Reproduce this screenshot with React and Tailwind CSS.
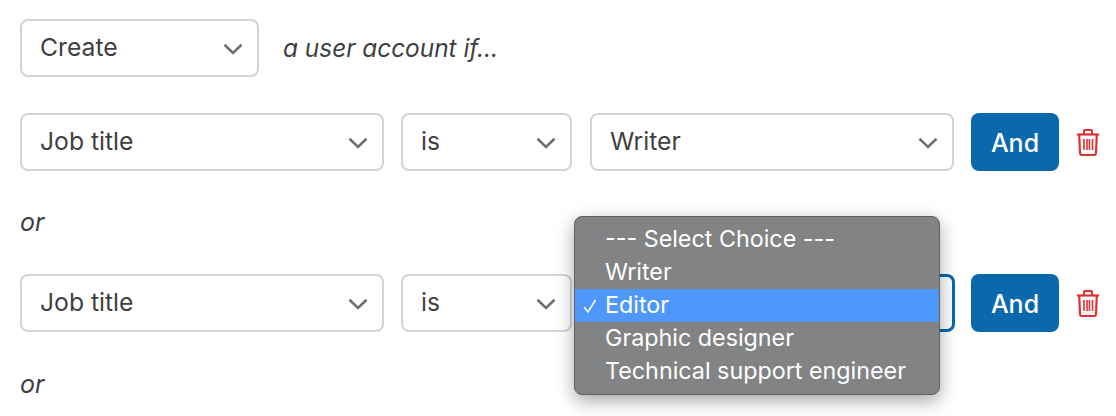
import React from "react";

function Chevron() {
  return (
    <svg width="20" height="12" viewBox="0 0 20 12" fill="none" className="shrink-0 mt-[2px]">
      <path d="M1.5 1.8 L10 10 L18.5 1.8" stroke="#707070" strokeWidth="2.6" />
    </svg>
  );
}

function Select({ label, className = "", focused = false }) {
  return (
    <div
      className={`h-[58px] flex items-center justify-between pl-[18px] pr-[14px] rounded-[8px] bg-white text-[24.7px] text-[#3f3f42] ${
        focused ? "border-[3px] border-[#0a68ad]" : "border-2 border-[#d4d4d4]"
      } ${className}`}
    >
      <span>{label}</span>
      <Chevron />
    </div>
  );
}

function Trash() {
  return (
    <svg width="24" height="27" viewBox="0 0 24 27" fill="none" stroke="#dc3232" strokeWidth="2.2" className="shrink-0">
      <path d="M1 5.5 H23" />
      <path d="M8 5 V2.5 Q8 1 9.5 1 H14.5 Q16 1 16 2.5 V5" />
      <path d="M3.2 5.5 L4 24 Q4.1 26 6 26 H18 Q19.9 26 20 24 L20.8 5.5" />
      <path d="M8 10 V21 M11 10 V21 M13.5 10 V21 M16.5 10 V21" strokeWidth="1.6" />
    </svg>
  );
}

function AndButton() {
  return (
    <div className="w-[88px] h-[58px] pt-[3px] flex items-center justify-center rounded-[8px] bg-[#0a68ad] text-white text-[25px] font-medium">
      And
    </div>
  );
}

function Row({ third, focused }) {
  return (
    <div className="flex items-center">
      <Select label="Job title" className="w-[364px]" />
      <Select label="is" className="w-[171px] ml-[17px]" />
      <div className="relative ml-[18px] w-[365px] h-[58px]">
        {focused ? (
          <Select label="" className="w-full" focused />
        ) : (
          <Select label={third} className="w-[364px]" />
        )}
        {focused && <Dropdown />}
      </div>
      <div className="ml-[16px]">
        <AndButton />
      </div>
      <div className="ml-[17px]">
        <Trash />
      </div>
    </div>
  );
}

const CHOICES = ["--- Select Choice ---", "Writer", "Editor", "Graphic designer", "Technical support engineer"];

function Dropdown() {
  return (
    <div className="absolute left-[-16px] top-[-58px] w-[366px] h-[179px] z-10 py-[6px] rounded-[8px] bg-[#828384] border border-[#5e5f60] shadow-[0_6px_18px_rgba(0,0,0,0.35)] text-white text-[23.3px] leading-[31px]">
      {CHOICES.map((c) => (
        <div key={c} className={`relative h-[33px] pl-[30px] whitespace-nowrap ${c === "Editor" ? "bg-[#4f97fb]" : ""}`}>
          {c === "Editor" && (
            <svg width="14" height="14" viewBox="0 0 14 14" fill="none" stroke="white" strokeWidth="1.5" className="absolute left-[8px] top-[10px]">
              <path d="M1 8 L5 13 L12.5 1" />
            </svg>
          )}
          {c}
        </div>
      ))}
    </div>
  );
}

export default function App() {
  return (
    <div className="w-[1116px] h-[416px] overflow-hidden bg-white pl-[20px] pt-[19px] font-['Inter',sans-serif]">
      <div className="flex items-center">
        <Select label="Create" className="w-[239px]" />
        <span className="ml-[24px] text-[24.4px] italic text-[#3f3f42]">a user account if...</span>
      </div>
      <div className="mt-[36px]">
        <Row third="Writer" />
      </div>
      <div className="mt-[35px] text-[25px] leading-[32px] italic text-[#3f3f42]">or</div>
      <div className="mt-[36px]">
        <Row third="Editor" focused />
      </div>
      <div className="mt-[36px] text-[25px] leading-[32px] italic text-[#3f3f42]">or</div>
    </div>
  );
}
